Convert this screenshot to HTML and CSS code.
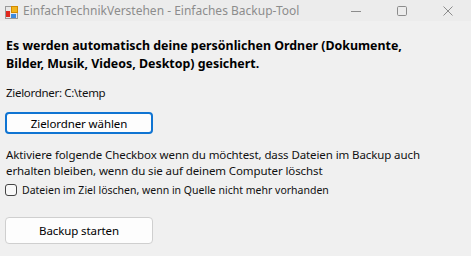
FILE: index.html
```html
<!DOCTYPE html>
<html lang="de">
<head>
<meta charset="utf-8">
<title>EinfachTechnikVerstehen - Einfaches Backup-Tool</title>
<link rel="stylesheet" href="styles.css">
</head>
<body>
<div class="window">
  <div class="titlebar">
    <svg class="app-icon" width="16" height="16" viewBox="0 0 16 16">
      <rect x="3.5" y="3.5" width="12" height="12" fill="#e8e8e8" stroke="#9a9a9a"/>
      <rect x="9" y="3" width="7" height="7" fill="#f2b51c"/>
      <rect x="9.5" y="3.5" width="6" height="6" fill="none" stroke="#d28a00"/>
      <rect x="4" y="8" width="4" height="6" fill="#e0281e"/>
      <rect x="9" y="11" width="5" height="4" fill="#3d8be0"/>
    </svg>
    <span class="title">EinfachTechnikVerstehen - Einfaches Backup-Tool</span>
    <div class="controls">
      <span class="ctl"><svg width="10" height="10" viewBox="0 0 10 10"><line x1="0" y1="5.5" x2="10" y2="5.5" stroke="#8c8c8c" stroke-width="1"/></svg></span>
      <span class="ctl"><svg width="10" height="10" viewBox="0 0 10 10"><rect x="0.5" y="0.5" width="9" height="9" rx="1.2" fill="none" stroke="#8c8c8c" stroke-width="1"/></svg></span>
      <span class="ctl"><svg width="10" height="10" viewBox="0 0 10 10"><path d="M0.5 0.5 L9.5 9.5 M9.5 0.5 L0.5 9.5" stroke="#8c8c8c" stroke-width="1"/></svg></span>
    </div>
  </div>
  <div class="content">
    <p class="headline">Es werden automatisch deine persönlichen Ordner (Dokumente,<br>Bilder, Musik, Videos, Desktop) gesichert.</p>
    <p class="target">Zielordner: C:\temp</p>
    <button class="btn btn-primary">Zielordner wählen</button>
    <p class="info">Aktiviere folgende Checkbox wenn du möchtest, dass Dateien im Backup auch<br>erhalten bleiben, wenn du sie auf deinem Computer löschst</p>
    <label class="check"><span class="box"></span><span class="check-label">Dateien im Ziel löschen, wenn in Quelle nicht mehr vorhanden</span></label>
    <button class="btn btn-start">Backup starten</button>
  </div>
</div>
</body>
</html>
```
FILE: styles.css
```css
* { box-sizing: border-box; }
html, body { margin: 0; padding: 0; }
body {
  width: 471px;
  height: 256px;
  overflow: hidden;
  background: #f0f0f0;
  font-family: "Segoe UI", "Noto Sans", sans-serif;
  font-size: 11.5px;
  letter-spacing: -0.1px;
  color: #111;
}
.window { display: flex; flex-direction: column; height: 256px; }
.titlebar {
  height: 21px;
  background: #ececec;
  display: flex;
  align-items: center;
  padding-left: 2px;
  letter-spacing: 0;
}
.app-icon { display: block; margin-top: 1px; }
.title {
  margin-left: 5px;
  color: #8c8c8c;
  font-size: 12px;
  line-height: 16px;
}
.controls { margin-left: auto; display: flex; align-items: center; }
.ctl {
  width: 46px;
  height: 20px;
  display: flex;
  align-items: center;
  justify-content: center;
}
.ctl svg { display: block; }
.content {
  padding: 16px 0 0 6px;
  display: flex;
  flex-direction: column;
  align-items: flex-start;
}
p { margin: 0; }
.headline {
  font-weight: bold;
  font-size: 12.4px;
  letter-spacing: 0;
  line-height: 18px;
  color: #000;
}
.target { margin-top: 12px; line-height: 16px; letter-spacing: -0.3px; }
.btn {
  font-family: inherit;
  font-size: 11.5px;
  letter-spacing: -0.1px;
  color: #000;
  background: #fdfdfd;
  width: 148px;
  margin-left: -1px;
  border-radius: 4px;
  padding: 0;
}
.btn-primary {
  margin-top: 11px;
  height: 22px;
  border: 2px solid #0f74d2;
}
.info { margin-top: 13px; line-height: 16px; }
.check {
  margin-top: 3px;
  display: flex;
  align-items: center;
  gap: 5px;
  line-height: 16px;
  margin-left: -1px;
}
.check-label { font-size: 10.5px; letter-spacing: 0; }
.box {
  width: 12px;
  height: 12px;
  border: 1px solid #444;
  border-radius: 3px;
  background: #f8f8f8;
}
.btn-start {
  margin-top: 19px;
  height: 27px;
  border: 1px solid #cfcfcf;
}
```
